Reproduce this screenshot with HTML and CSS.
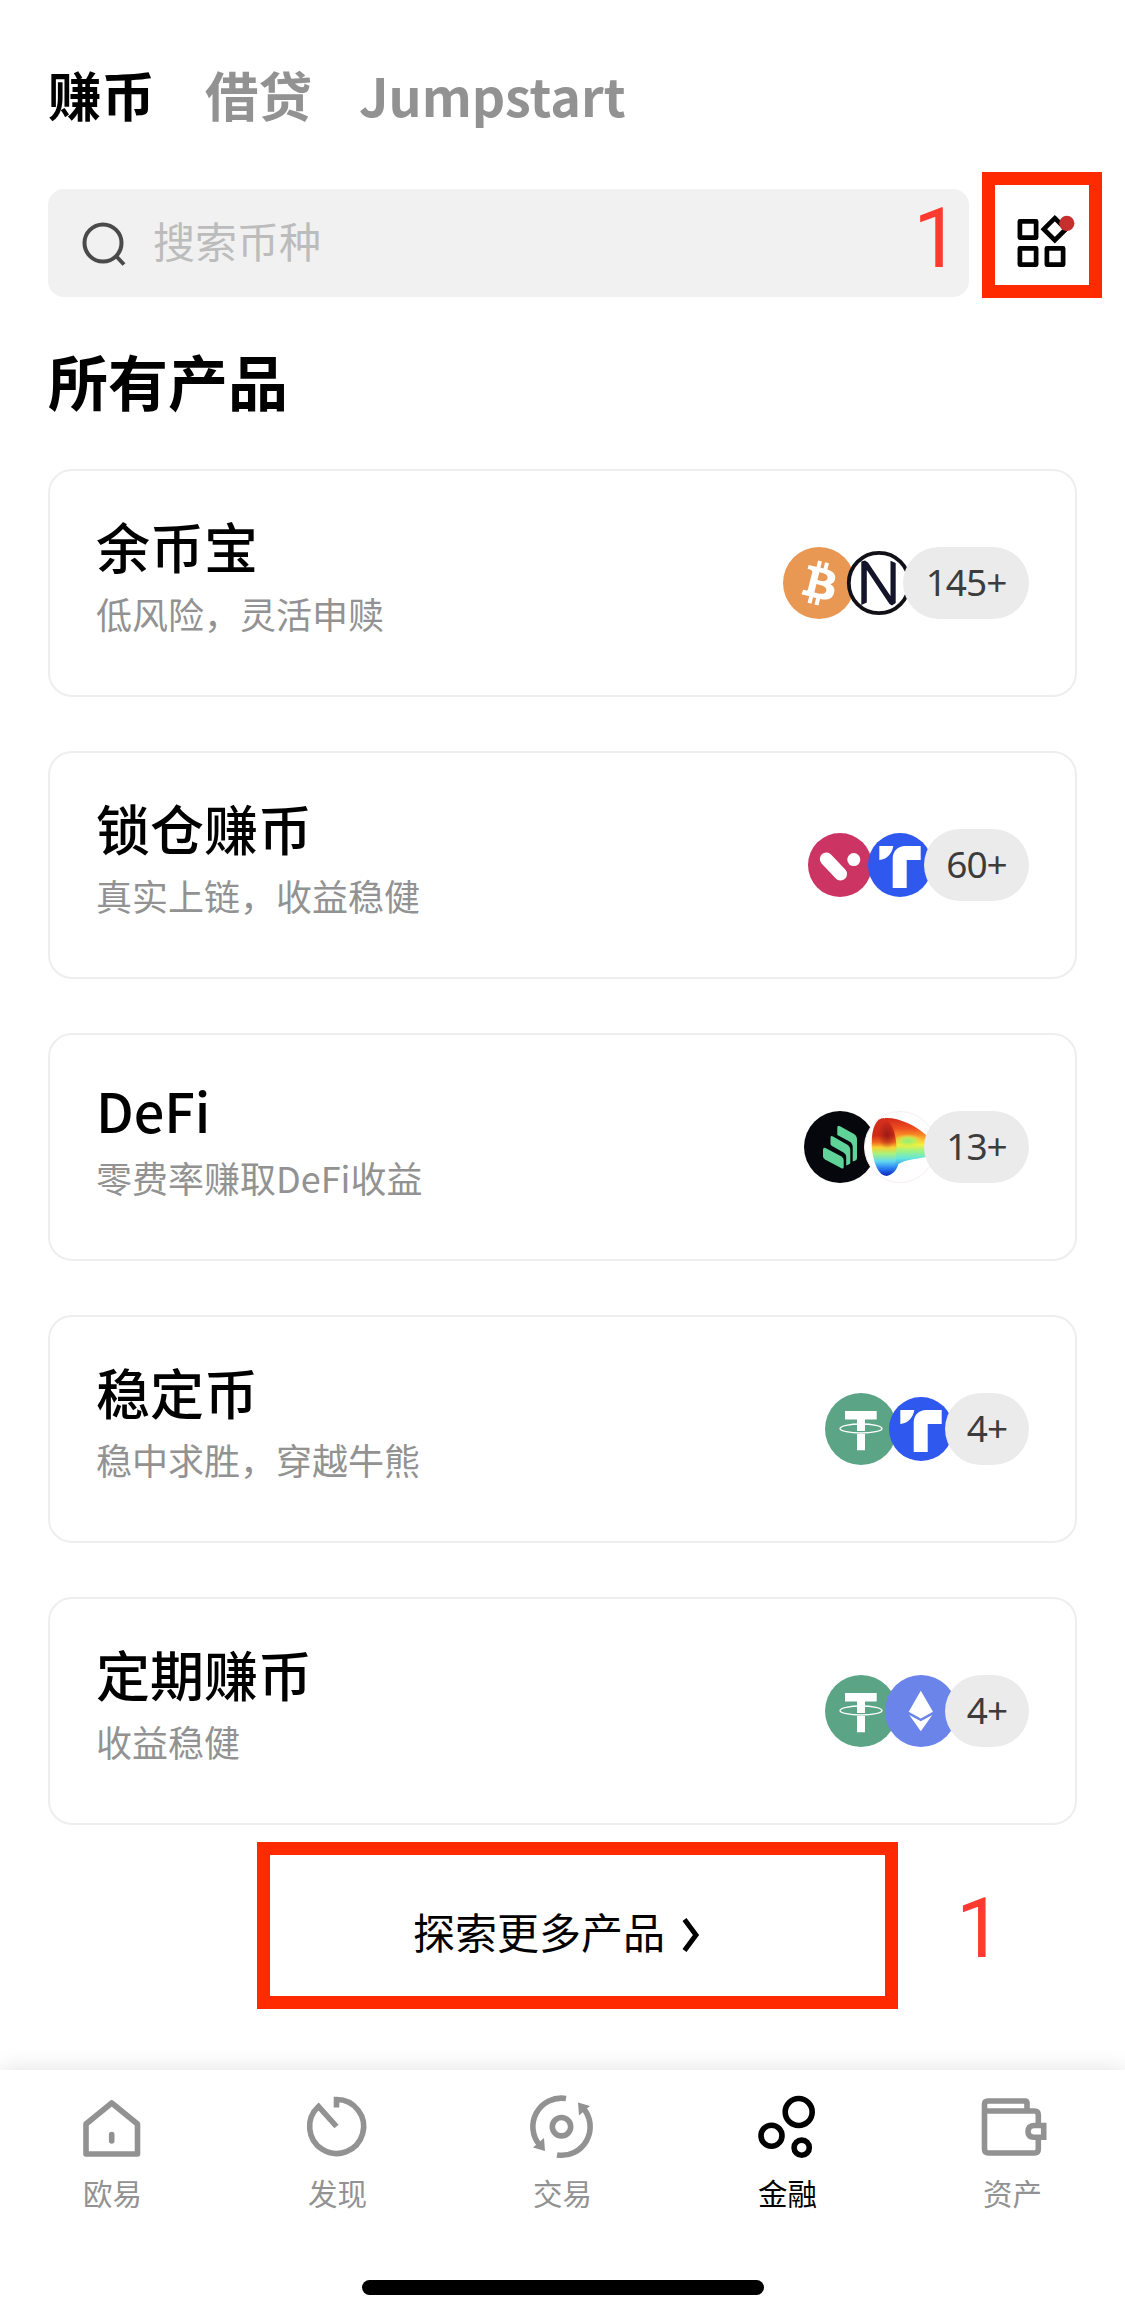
FILE: index.html
```html
<!DOCTYPE html>
<html lang="zh-CN">
<head>
<meta charset="utf-8">
<title>赚币</title>
<link rel="stylesheet" href="styles.css">
</head>
<body>
<svg class="defs" width="0" height="0" aria-hidden="true">
  <defs>
    <symbol id="tusd" viewBox="0 0 72 72">
      <circle cx="36" cy="36" r="32" fill="#2f58ee"/>
      <path d="M15.3 17H29.3C28 25 22.500 30.500 15.300 31Z" fill="#fff"/>
      <path d="M56.700 17V31H42.700V59H28.700V29.500C28.700 22 34 17 41 17Z" fill="#fff"/>
    </symbol>
    <symbol id="usdt" viewBox="0 0 72 72">
      <circle cx="36" cy="36" r="36" fill="#5ba586"/>
      <path d="M20 18H51.700V26.500H40V57.300H32V26.500H20Z" fill="#fff"/>
      <path d="M31 39.500H41" stroke="#5ba586" stroke-width="3"/>
      <ellipse cx="36" cy="35.500" rx="21" ry="4.500" fill="none" stroke="#fff" stroke-width="1.300"/>
    </symbol>
  </defs>
</svg>
<div class="page">
  <nav class="tabs">
    <span class="tab tab--on">赚币</span>
    <span class="tab">借贷</span>
    <span class="tab tab--latin">Jumpstart</span>
  </nav>

  <div class="tools">
    <div class="search">
      <svg class="search__icon" width="48" height="48" viewBox="0 0 48 48" fill="none" stroke="#4a4a4a" stroke-width="4"><circle cx="23" cy="23" r="18.500"/><path d="M36 36L44 44.500"/></svg>
      <span class="search__hint">搜索币种</span>
      <span class="mark">1</span>
    </div>
    <div class="menu">
      <svg width="54" height="54" viewBox="0 0 54 54">
        <g fill="none" stroke="#000" stroke-width="4.700" stroke-linejoin="round">
          <path d="M4.900 8.400h16.200v16.200H4.900zM4.900 35.400h16.200v16.200H4.900zM31.900 35.400h16.200v16.200H31.900z"/>
          <path d="M39.800 5.200l11 11-11 11-11-11z" stroke-linejoin="miter"/>
        </g>
        <circle cx="51.800" cy="10.300" r="7.600" fill="#c5302f"/>
      </svg>
    </div>
  </div>

  <h1 class="heading">所有产品</h1>

  <ul class="cards">
    <li class="card">
      <div><h2 class="card__title">余币宝</h2><p class="card__note">低风险，灵活申赎</p></div>
      <div class="coins">
        <svg class="coin" viewBox="0 0 32 32"><circle cx="16" cy="16" r="16" fill="#e89853"/><path fill="#fff" d="M23.189 14.020c.314-2.096-1.283-3.223-3.465-3.975l.708-2.840-1.728-.430-.690 2.765c-.454-.114-.920-.220-1.385-.326l.695-2.783L15.596 6l-.708 2.839c-.376-.086-.746-.170-1.104-.260l.002-.009-2.384-.595-.460 1.846s1.283.294 1.256.312c.700.175.826.638.805 1.006l-.806 3.235c.048.012.110.030.180.057l-.183-.045-1.130 4.532c-.086.212-.303.531-.793.410.018.025-1.256-.313-1.256-.313l-.858 1.978 2.250.561c.418.105.828.215 1.231.318l-.715 2.872 1.727.430.708-2.840c.472.127.930.245 1.378.357l-.706 2.828 1.728.430.715-2.866c2.948.558 5.164.333 6.097-2.333.752-2.146-.037-3.385-1.588-4.192 1.130-.260 1.980-1.003 2.207-2.538zm-3.950 5.538c-.533 2.147-4.148.986-5.320.695l.950-3.805c1.172.293 4.929.872 4.370 3.110zm.535-5.569c-.487 1.953-3.495.960-4.470.717l.860-3.450c.975.243 4.118.696 3.610 2.733z"/></svg>
        <svg class="coin" viewBox="0 0 72 72"><circle cx="36" cy="36" r="30.200" fill="#fff" stroke="#101016" stroke-width="3.800"/><path d="M18.300 14.500L22 13.500L25 15.500L47.500 49V13.700L52.700 16V56L49 58.500L46.500 57L23.800 23V55.500L18.300 58Z" fill="#14142b"/></svg>
        <span class="count count--3">145+</span>
      </div>
    </li>
    <li class="card">
      <div><h2 class="card__title">锁仓赚币</h2><p class="card__note">真实上链，收益稳健</p></div>
      <div class="coins">
        <svg class="coin" viewBox="0 0 72 72"><circle cx="36" cy="36" r="32" fill="#cb3463"/><path d="M22.300 30L36.500 45" stroke="#fff" stroke-width="13" stroke-linecap="round"/><circle cx="49.800" cy="30.600" r="6.500" fill="#fff"/></svg>
        <svg class="coin"><use href="#tusd"/></svg>
        <span class="count count--2">60+</span>
      </div>
    </li>
    <li class="card">
      <div><h2 class="card__title">DeFi</h2><p class="card__note">零费率赚取DeFi收益</p></div>
      <div class="coins">
        <svg class="coin" viewBox="0 0 72 72"><circle cx="36" cy="36" r="36" fill="#05070d"/><g fill="#5fd398"><path d="M33.300 16.500Q33.500 14 36 15.300L50 23Q53 25 53 28.500V47Q53 48.800 51.500 49.500L48.700 50.500V36Q48.700 32.500 45.500 30.500L33.300 24Z"/><path d="M26.500 26.500Q26.800 24.300 29 25.500L43 33.500Q46.300 35.500 46.300 39V52Q46.300 53 42.200 54.500V45.500Q42 43 39.500 41.500L28 35Q26.500 34 26.500 33Z"/><path d="M19 38.500Q19.300 36 21.500 37L37.500 45.500Q39.700 47 39.700 49V56Q39.500 58.300 37.500 57.300L21 48.500Q19 47 19 45.500Z"/></g></svg>
        <svg class="coin" viewBox="0 0 72 72">
          <defs>
            <linearGradient id="cone" x1="0" y1="0" x2="0" y2="1"><stop offset="0" stop-color="#d3281a"/><stop offset=".18" stop-color="#ee4f20"/><stop offset=".34" stop-color="#fba32c"/><stop offset=".46" stop-color="#f8ef3c"/><stop offset=".56" stop-color="#a4f47c"/><stop offset=".7" stop-color="#63e6dc"/><stop offset=".85" stop-color="#2f8cf3"/><stop offset="1" stop-color="#1233c4"/></linearGradient>
            <linearGradient id="mouth" x1="0" y1="0" x2="0" y2="1"><stop offset="0" stop-color="#d3301d"/><stop offset=".3" stop-color="#cf2a1a"/><stop offset=".42" stop-color="#f0651f"/><stop offset=".51" stop-color="#fbd034"/><stop offset=".62" stop-color="#a8f27c"/><stop offset=".75" stop-color="#62d9ee"/><stop offset=".87" stop-color="#2b7ff5"/><stop offset="1" stop-color="#0c23b8"/></linearGradient>
            <radialGradient id="shade"><stop offset="0" stop-color="#8f1712" stop-opacity=".8"/><stop offset="1" stop-color="#8f1712" stop-opacity="0"/></radialGradient>
            <radialGradient id="glow"><stop offset="0" stop-color="#8cf07a"/><stop offset=".5" stop-color="#b9f45c" stop-opacity=".8"/><stop offset="1" stop-color="#f8e93c" stop-opacity="0"/></radialGradient>
          </defs>
          <circle cx="36" cy="36" r="35.500" fill="#fff" stroke="#f6eef1"/>
          <path d="M21 7C33 6 52 14 62 24V46C52 48 40 49 34.500 53C32 61 27 64.700 22 64.700Z" fill="url(#cone)"/>
          <ellipse cx="44" cy="30" rx="15" ry="7" fill="url(#glow)"/>
          <path d="M20 7C28 11 32.500 24 32.500 38C32.500 54 29 64.700 22 64.700C13 64.700 7.700 46 7.700 32C7.700 17 12 7 20 7Z" fill="url(#mouth)"/>
          <ellipse cx="23" cy="24" rx="9" ry="14" fill="url(#shade)"/>
        </svg>
        <span class="count count--2">13+</span>
      </div>
    </li>
    <li class="card">
      <div><h2 class="card__title">稳定币</h2><p class="card__note">稳中求胜，穿越牛熊</p></div>
      <div class="coins">
        <svg class="coin"><use href="#usdt"/></svg>
        <svg class="coin"><use href="#tusd"/></svg>
        <span class="count count--1">4+</span>
      </div>
    </li>
    <li class="card">
      <div><h2 class="card__title">定期赚币</h2><p class="card__note">收益稳健</p></div>
      <div class="coins">
        <svg class="coin"><use href="#usdt"/></svg>
        <svg class="coin" viewBox="0 0 72 72"><circle cx="36" cy="36" r="36" fill="#6a84ea"/><path d="M35.800 15.700L48 36.700L35.800 43.500L23.700 36.700ZM24.300 40L35.800 46.300L47.300 40L35.800 56.200Z" fill="#fff"/></svg>
        <span class="count count--1">4+</span>
      </div>
    </li>
  </ul>

  <div class="more">
    <div class="more__box">
      <span>探索更多产品</span>
      <svg class="more__arrow" width="18" height="36" viewBox="0 0 18 36" fill="none" stroke="#000" stroke-width="5"><path d="M2.500 2.500L14 18L2.500 33.500"/></svg>
    </div>
    <span class="mark">1</span>
  </div>

  <footer class="bar">
    <div class="bar__items">
      <div class="item"><svg class="item__icon" viewBox="0 0 72 72"><path d="M9 34L34.700 13L60.500 34V64H9Z" stroke-linejoin="round"/><path d="M34.700 44.500V51" stroke-linecap="round"/></svg>欧易</div>
      <div class="item"><svg class="item__icon" viewBox="0 0 72 72"><path d="M34.500 17.500V9.500A27 27 0 1 1 16.500 16.500L34.500 36.500"/></svg>发现</div>
      <div class="item"><svg class="item__icon" viewBox="0 0 72 72"><circle cx="34.500" cy="36.700" r="9.200"/><path d="M39 8.500A28.500 28.500 0 0 0 13 55.500M30 64.900A28.500 28.500 0 0 0 56 17.900"/><path d="M17 48L18 61L6 57.500ZM52 25.400L51 12.400L63 15.900Z" fill="currentColor" stroke="none"/></svg>交易</div>
      <div class="item item--on"><svg class="item__icon" viewBox="0 0 72 72"><circle cx="46.700" cy="22" r="13.500"/><circle cx="19.500" cy="45.700" r="10.500"/><circle cx="49.700" cy="57.700" r="7.600"/></svg>金融</div>
      <div class="item"><svg class="item__icon" viewBox="0 0 72 72"><path d="M50 20V13Q50 11 48 11H11Q7.500 11 7.500 14.500V59Q7.500 63 11.500 63H57.500Q61.300 63 61.300 59V50M61.300 33V25Q61.300 21 57.500 21H7.500"/><path d="M66.700 35.500H57Q51 36 51 41.500Q51 47 57 47.300H66.700Z"/></svg>资产</div>
    </div>
    <div class="handle"></div>
  </footer>
</div>
</body>
</html>
```
FILE: styles.css
```css
* { box-sizing: border-box; }
body {
  margin: 0;
  background: #fff;
  color: #000;
  font-family: "Noto Sans CJK SC", "Noto Sans", sans-serif;
}
h1, h2, p, ul { margin: 0; padding: 0; font-weight: inherit; list-style: none; }
.defs { position: absolute; }
.page { width: 1125px; height: 2319px; display: flex; flex-direction: column; overflow: hidden; }

.tabs {
  height: 189px;
  padding: 54px 48px 0;
  display: flex;
  align-items: flex-start;
  gap: 50px;
  font-size: 53.5px;
  line-height: 80px;
  font-weight: 700;
}
.tab { color: #929292; white-space: nowrap; }
.tab--on { color: #000; }
.tab--latin { margin: 1px 0 0 -3px; font-size: 52px; letter-spacing: 0; }

.tools { height: 108px; padding-left: 48px; display: flex; align-items: flex-start; gap: 13px; }
.search {
  width: 921px;
  height: 108px;
  padding: 0 9px 0 32px;
  display: flex;
  align-items: center;
  background: #f1f1f1;
  border-radius: 16px;
}
.search__icon { margin-top: 1px; }
.search__hint { margin: -6px 0 0 25px; font-size: 42px; line-height: 60px; color: #bcbcbc; flex: 1; }
.mark { font-family: Roboto, Arial, sans-serif; font-size: 83px; line-height: 83px; color: #ff3b30; }
.search .mark { margin-top: -10px; }
.menu {
  width: 120px;
  height: 126px;
  margin-top: -17px;
  padding: 28px 0 0 20px;
  border: 13px solid #ff2a00;
}
.menu svg { display: block; overflow: visible; }

.heading { height: 172px; padding: 39px 48px 0; font-size: 60px; line-height: 88px; font-weight: 700; }

.cards { padding: 0 48px; display: flex; flex-direction: column; gap: 54px; }
.card {
  height: 228px;
  padding: 0 46px 0 46px;
  display: flex;
  justify-content: space-between;
  align-items: center;
  border: 2px solid #eee;
  border-radius: 24px;
}
.card__title { font-size: 54px; line-height: 80px; font-weight: 500; margin-top: -21px; }
.card__note { font-size: 36px; line-height: 54px; color: #929292; }
.coins { display: flex; align-items: center; }
.coin { width: 72px; height: 72px; margin-right: -12px; display: block; }
.count {
  height: 72px;
  border-radius: 36px;
  background: #ebebeb;
  color: #3c3c3c;
  font-family: "Noto Sans", sans-serif;
  font-size: 37px;
  line-height: 70px;
  letter-spacing: -1px;
  text-align: center;
  z-index: 1;
}
.count--1 { width: 84px; }
.count--2 { width: 105px; }
.count--3 { width: 126px; }

.more { height: 245px; padding: 17px 0 0 257px; display: flex; align-items: flex-start; }
.more__box {
  width: 641px;
  height: 167px;
  padding: 10px 42px 0 0;
  display: flex;
  align-items: center;
  justify-content: center;
  gap: 17px;
  border: 13px solid #ff2a00;
  font-size: 42px;
  line-height: 60px;
}
.more__arrow { margin-top: 8px; }
.more .mark { margin: 45px 0 0 58px; }

.bar { flex: 1; background: #fff; box-shadow: 0 0 22px rgba(0, 0, 0, .12); display: flex; flex-direction: column; align-items: center; }
.bar__items { width: 100%; height: 210px; padding-top: 20px; display: grid; grid-template-columns: repeat(5, 1fr); }
.item { display: flex; flex-direction: column; align-items: center; font-size: 29.5px; line-height: 44px; color: #929292; }
.item--on { color: #000; }
.item__icon { width: 72px; height: 72px; margin-bottom: 8px; fill: none; stroke: currentColor; stroke-width: 5.6; }
.handle { width: 402px; height: 15px; border-radius: 8px; background: #000; }
```
